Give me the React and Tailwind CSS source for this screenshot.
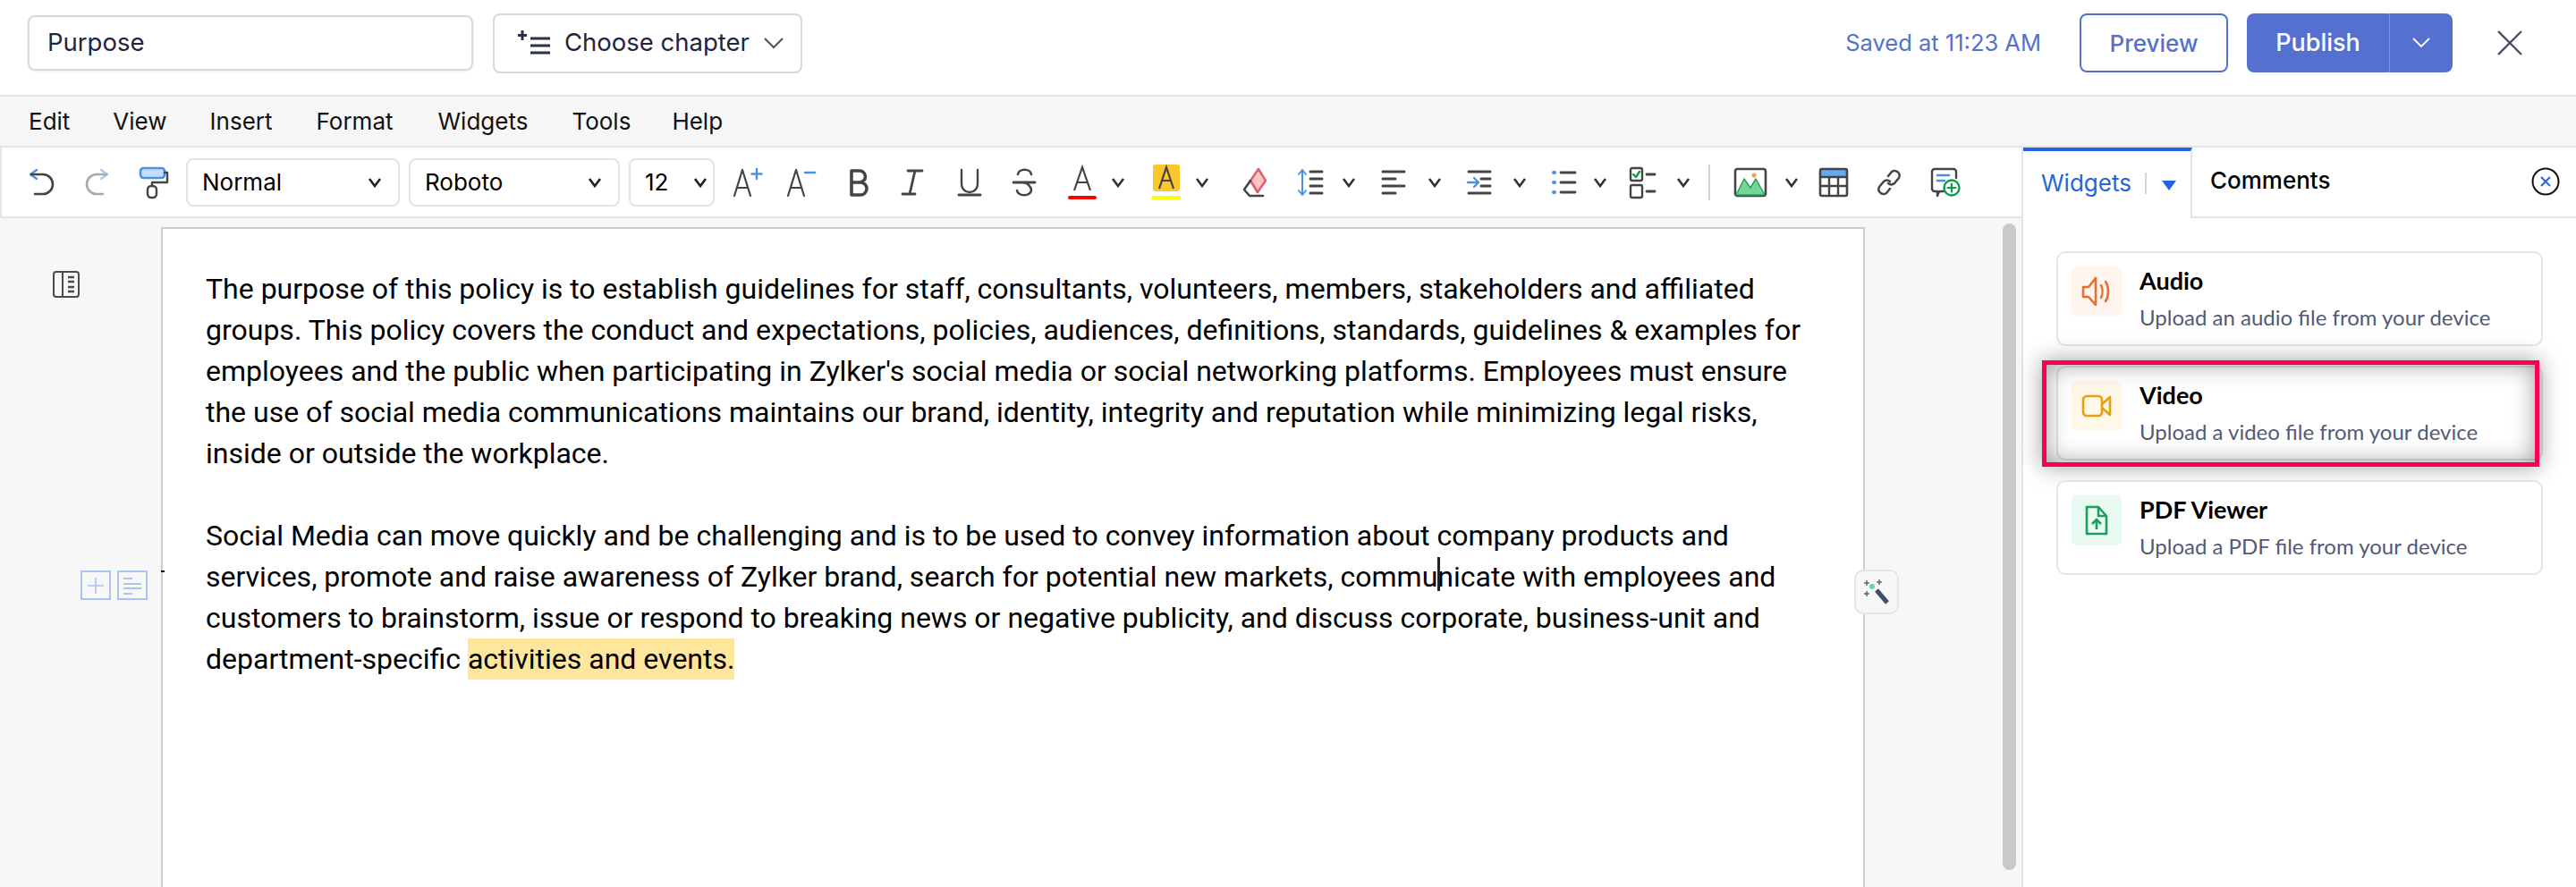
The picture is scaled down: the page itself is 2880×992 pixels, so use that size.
import React from "react";

const Chev = ({ c = "", w = 20, color = "#333" }) => (
  <span className={`flex justify-center shrink-0 ${c}`} style={{ width: w }}>
    <svg width="16" height="12" viewBox="0 0 16 12" fill="none" stroke={color} strokeWidth="2.600"><path d="M2 2l6 8 6-8" /></svg>
  </span>
);

const Ic = ({ c = "", children }) => (
  <span className={`w-10 h-10 flex items-center justify-center shrink-0 ${c}`}>
    <svg width="40" height="40" viewBox="0 0 40 40" fill="none" strokeLinecap="round" strokeLinejoin="round">{children}</svg>
  </span>
);

const D = "#444";
const B = "#4c90e6";

const Select = ({ c, label, w2 = "" }) => (
  <div className={`h-[54px] border-2 border-[#e3e3e3] rounded-[8px] flex items-center justify-between shrink-0 text-[26px] text-black ${c} ${w2}`}>
    <span>{label}</span>
    <Chev w={20} color="#222" />
  </div>
);

const Card = ({ title, sub, bg, icon, children }) => (
  <div className="relative h-[106px] border-2 border-[#e4e4ea] rounded-[10px] bg-white flex pl-[15px] pt-[15px]">
    <div className={`w-14 h-14 rounded-[6px] flex items-center justify-center shrink-0 ${bg}`}>{icon}</div>
    <div className="ml-5 -mt-[1px]">
      <div className="text-[27px] leading-[34px] font-bold text-black">{title}</div>
      <div className="text-[24px] leading-[34px] mt-[7px] text-[#525a78]">{sub}</div>
    </div>
    {children}
  </div>
);

export default function App() {
  return (
    <div className="w-[2880px] h-[992px] overflow-hidden flex flex-col bg-white font-['Inter',sans-serif]">
      <header className="h-[108px] border-b-2 border-[#e4e4e4] flex items-center shrink-0 pb-[12px] pt-[2px]">
        <div className="ml-[31px] w-[498px] h-[62px] border-2 border-[#d8d8df] rounded-[8px] flex items-center pl-5 text-[27.500px] text-[#1f2440] shadow-[0_1px_3px_rgba(0,0,0,0.08)]">Purpose</div>
        <div className="ml-[22px] w-[346px] h-[67px] border-2 border-[#d8d8df] rounded-[8px] flex items-center pl-[26px] text-[27.500px] text-[#1f2440]">
          <svg width="36" height="28" viewBox="0 0 36 28" fill="none" stroke="#2b3048" strokeWidth="3"><path d="M5 0v11M0 5.500h10M14 9h22M14 17h22M14 25h22" /></svg>
          <span className="ml-[16px]">Choose chapter</span>
          <span className="ml-[16px]"><svg width="22" height="14" viewBox="0 0 22 14" fill="none" stroke="#4a5068" strokeWidth="2"><path d="M1 2l10 10L21 2" /></svg></span>
        </div>
        <div className="ml-auto text-[25.500px] text-[#5470d0]">Saved at 11:23 AM</div>
        <button className="ml-[43px] w-[166px] h-[66px] border-2 border-[#5470d0] rounded-[8px] text-[#5470d0] text-[26px] font-medium bg-white">Preview</button>
        <div className="ml-[21px] w-[230px] h-[66px] rounded-[8px] bg-[#5470d0] flex items-center text-white text-[27px] font-medium">
          <span className="w-[159px] text-center">Publish</span>
          <span className="w-[71px] h-full border-l border-[#8094dc] flex items-center justify-center">
            <svg width="20" height="12" viewBox="0 0 20 12" fill="none" stroke="#fff" strokeWidth="1.800"><path d="M1 1l9 9 9-9" /></svg>
          </span>
        </div>
        <div className="ml-[50px] mr-[60px]">
          <svg width="28" height="28" viewBox="0 0 28 28" stroke="#4a5068" strokeWidth="2.400" fill="none"><path d="M1 1l26 26M27 1L1 27" /></svg>
        </div>
      </header>

      <nav className="h-[57px] bg-[#f6f6f6] border-b-2 border-[#e4e4e4] flex items-center shrink-0 text-[26px] text-[#111]">
        <span className="ml-[32px]">Edit</span>
        <span className="ml-[48px]">View</span>
        <span className="ml-[48px]">Insert</span>
        <span className="ml-[49px]">Format</span>
        <span className="ml-[50px]">Widgets</span>
        <span className="ml-[49px]">Tools</span>
        <span className="ml-[46px]">Help</span>
      </nav>

      <div className="flex flex-1 min-h-0">
        <div className="w-[2260px] flex flex-col shrink-0">
          <div className="h-[79px] border-b-2 border-l-2 border-[#e4e4e4] flex items-center pl-[24px] shrink-0">
            <Ic>
              <path d="M15 6l-7 5 7 5" stroke={B} strokeWidth="2.400" />
              <path d="M9 11h13a11 11 0 0 1 0 22h-9" stroke={D} strokeWidth="2.600" />
            </Ic>
            <Ic c="ml-[22px]">
              <path d="M25 6l7 5-7 5" stroke="#a9ccf6" strokeWidth="2.400" />
              <path d="M31 11H20a11 11 0 0 0 0 22h7" stroke="#aaa" strokeWidth="2.600" />
            </Ic>
            <Ic c="ml-[23px]">
              <rect x="6" y="4" width="27" height="11" rx="3.500" fill="#c5dcfb" stroke={B} strokeWidth="2.600" />
              <path d="M33 9h3v11H19v4" stroke={D} strokeWidth="2.400" />
              <rect x="14" y="24" width="10" height="13" rx="4" stroke={D} strokeWidth="2.400" />
            </Ic>
            <Select c="ml-[17px] w-[239px] pl-[16px] pr-[16px]" label="Normal" />
            <Select c="ml-[10px] w-[236px] pl-[16px] pr-[16px]" label="Roboto" />
            <Select c="ml-[10px] w-[96px] pl-[16px] pr-[4px]" label="12" />
            <Ic c="ml-[17px]">
              <path d="M5 35l9-29 9 29M8 26h12" stroke={D} strokeWidth="2.200" />
              <path d="M30 5v11M24.500 10.500h11" stroke={B} strokeWidth="2.400" />
            </Ic>
            <Ic c="ml-[20px]">
              <path d="M5 35l9-29 9 29M8 26h12" stroke={D} strokeWidth="2.200" />
              <path d="M24 9h11" stroke={B} strokeWidth="2.600" />
            </Ic>
            <Ic c="ml-[25px]">
              <path d="M11 7h9a6.500 6.500 0 0 1 0 13h-9zM11 20h10a7 7 0 0 1 0 14H11z" stroke={D} strokeWidth="3.600" />
            </Ic>
            <Ic c="ml-[19px]">
              <path d="M15 7h16M9 33h14M23 7l-6 26" stroke={D} strokeWidth="2.800" />
            </Ic>
            <Ic c="ml-[24px]">
              <path d="M11 6v16a9 9 0 0 0 18 0V6" stroke={D} strokeWidth="2.400" />
              <path d="M8 34h24" stroke={D} strokeWidth="3" />
            </Ic>
            <Ic c="ml-[21px]">
              <path d="M28 11c-1-7-14-7-15 0M12 29c1 7 15 7 16 0 0-4-4-8-8-9" stroke={D} strokeWidth="2.600" />
              <path d="M8 20h24" stroke={D} strokeWidth="2.800" />
            </Ic>
            <span className="relative w-10 h-10 ml-[25px] shrink-0 flex items-center justify-center">
              <svg width="40" height="40" viewBox="0 0 40 40" fill="none"><path d="M11 29l9-26 9 26M14 20h12" stroke={D} strokeWidth="2.200" /></svg>
              <span className="absolute left-[4px] top-[35px] w-8 h-[4px] rounded-[2px] bg-[#fb0000]"></span>
            </span>
            <Chev c="ml-[10px]" />
            <span className="relative w-10 h-10 ml-[24px] shrink-0 flex items-center justify-center">
              <span className="absolute left-[5px] top-0 w-[30px] h-[30px] rounded-[3px] bg-[#fdc62e]"></span>
              <svg className="relative" width="40" height="40" viewBox="0 0 40 40" fill="none"><path d="M12 27l8-24 8 24M15 18h10" stroke={D} strokeWidth="2.200" /></svg>
              <span className="absolute left-[4px] top-[35px] w-8 h-[4px] bg-[#ffff00]"></span>
            </span>
            <Chev c="ml-[10px]" />
            <Ic c="ml-[26px]">
              <path d="M27 5l8 13-9 13-8-13z" fill="#fcc4c4" stroke="#dd5f6e" strokeWidth="2.400" />
              <path d="M18 18l8 13" stroke="#dd5f6e" strokeWidth="2.200" />
              <path d="M18 18l-7 10 6 7h15" stroke={D} strokeWidth="2.600" />
            </Ic>
            <Ic c="ml-[25px]">
              <path d="M11 6v28M7 11l4-5 4 5M7 29l4 5 4-5" stroke={B} strokeWidth="2" />
              <path d="M20 8h13M20 16h13M20 24h13M20 32h13" stroke={D} strokeWidth="3" />
            </Ic>
            <Chev c="ml-[13px]" />
            <Ic c="ml-[20px]">
              <path d="M8 8h24M8 16h14M8 24h24M8 32h14" stroke={D} strokeWidth="3" />
            </Ic>
            <Chev c="ml-[16px]" />
            <Ic c="ml-[20px]">
              <path d="M8 8h24M8 32h24M22 16h10M22 24h10" stroke={D} strokeWidth="3" />
              <path d="M7 20h12M14 15l5 5-5 5" stroke={B} strokeWidth="2.400" />
            </Ic>
            <Chev c="ml-[15px]" />
            <Ic c="ml-[20px]">
              <path d="M16 9h16M16 20h16M16 31h16" stroke={D} strokeWidth="2.800" />
              <path d="M8 9h1M8 20h1M8 31h1" stroke={B} strokeWidth="4" />
            </Ic>
            <Chev c="ml-[10px]" />
            <Ic c="ml-[17px]">
              <rect x="7" y="4" width="13" height="14" rx="2" stroke={D} strokeWidth="2.400" />
              <path d="M10 11l3 3 4-6" stroke="#0c9b4d" strokeWidth="2.400" />
              <rect x="7" y="23" width="13" height="14" rx="2" stroke={D} strokeWidth="2.400" />
              <path d="M25 11h9M25 30h9" stroke={D} strokeWidth="2.800" />
            </Ic>
            <Chev c="ml-[16px]" />
            <span className="ml-[18px] w-[2px] h-10 bg-[#cfcfcf] shrink-0"></span>
            <Ic c="ml-[25px]">
              <rect x="3" y="5" width="34" height="30" rx="2.500" stroke={D} strokeWidth="2.600" />
              <path d="M4 34l9-18 7 10 6-10 10 18z" fill="#72d79a" stroke="#2e9d5e" strokeWidth="1.500" />
              <circle cx="24" cy="12" r="2.500" fill="#f3a23a" />
            </Ic>
            <Chev c="ml-[16px]" />
            <Ic c="ml-[17px]">
              <rect x="5" y="5" width="30" height="9" fill="#69a8ee" />
              <rect x="5" y="5" width="30" height="30" rx="2" stroke={D} strokeWidth="2.600" />
              <path d="M15 14v21M25 14v21M5 14h30M5 24h30" stroke={D} strokeWidth="2.400" />
            </Ic>
            <Ic c="ml-[22px]">
              <path d="M19 13l4-5a5.500 5.500 0 0 1 8 7l-5 6a5.500 5.500 0 0 1-7 0M21 27l-4 5a5.500 5.500 0 0 1-8-7l5-6a5.500 5.500 0 0 1 7 0" stroke={D} strokeWidth="2.500" />
            </Ic>
            <Ic c="ml-[23px]">
              <path d="M18 30h-5l-2 5v-5H8a3 3 0 0 1-3-3V8a3 3 0 0 1 3-3h21a3 3 0 0 1 3 3v7" stroke={D} strokeWidth="2.400" />
              <path d="M11 12h13" stroke={B} strokeWidth="2.600" />
              <path d="M11 18h8" stroke={B} strokeWidth="2.600" />
              <circle cx="27" cy="26" r="8.500" fill="#fff" stroke="#0c9b4d" strokeWidth="2.400" />
              <path d="M27 21.500v9M22.500 26h9" stroke="#0c9b4d" strokeWidth="2.200" />
            </Ic>
          </div>

          <div className="flex-1 min-h-0 flex bg-[#f7f7f7] pt-[10px]">
            <div className="w-[180px] shrink-0 flex flex-col">
              <div className="ml-[59px] mt-[49px]">
                <svg width="30" height="30" viewBox="0 0 30 30" fill="none" stroke="#4a4a4a" strokeWidth="2"><rect x="1" y="1" width="28" height="28" rx="3" /><path d="M11 1v28" /><path d="M17 7h7M17 12h7M17 18h7M17 23h7" strokeWidth="2.400" /></svg>
              </div>
              <div className="ml-[90px] mt-[305px] flex gap-[7px]">
                <span className="w-[34px] h-[33px] border-2 border-[#a9c3f3] flex items-center justify-center">
                  <svg width="20" height="20" viewBox="0 0 20 20" stroke="#a9c3f3" strokeWidth="1.600"><path d="M10 1v18M1 10h18" /></svg>
                </span>
                <span className="w-[34px] h-[33px] border-2 border-[#a9c3f3] flex items-center justify-center">
                  <svg width="22" height="20" viewBox="0 0 22 20" stroke="#a9c3f3" strokeWidth="1.800"><path d="M1 2h10M1 8h20M1 13h20M1 19h10" /></svg>
                </span>
              </div>
            </div>
            <div className="relative w-[1905px] shrink-0 bg-white border-t-2 border-x-2 border-[#cdcdcd] pl-[48px] pt-[44px] text-[32px] leading-[46px] text-black font-['Roboto',sans-serif] whitespace-nowrap">
              <span className="absolute -left-[2px] top-[382px] w-[4px] h-[2px] bg-black"></span>
              <p>
                The purpose of this policy is to establish guidelines for staff, consultants, volunteers, members, stakeholders and affiliated<br />
                groups. This policy covers the conduct and expectations, policies, audiences, definitions, standards, guidelines &amp; examples for<br />
                employees and the public when participating in Zylker's social media or social networking platforms. Employees must ensure<br />
                the use of social media communications maintains our brand, identity, integrity and reputation while minimizing legal risks,<br />
                inside or outside the workplace.
              </p>
              <p className="mt-[46px]">
                Social Media can move quickly and be challenging and is to be used to convey information about company products and<br />
                services, promote and raise awareness of Zylker brand, search for potential new markets, commu<span className="relative"><span className="absolute left-0 top-[-3px] w-[3px] h-[38px] bg-[#222]"></span></span>nicate with employees and<br />
                customers to brainstorm, issue or respond to breaking news or negative publicity, and discuss corporate, business-unit and<br />
                department-specific <span className="bg-[#fee69c] py-[4px]">activities and events.</span>
              </p>
            </div>
            <div className="relative flex-1">
              <div className="absolute -left-[12px] top-[383px] w-[50px] h-[50px] rounded-[10px] border-2 border-[#e6e6e6] bg-[#f7f7f7] flex items-center justify-center">
                <svg width="30" height="30" viewBox="0 0 30 30" fill="none"><path d="M15 13l12 14" stroke="#3f5168" strokeWidth="5" /><path d="M4 2v6M1 5h6M18 1v6M15 4h6M4 14v6M1 17h6" stroke="#5a6b80" strokeWidth="1.500" /><circle cx="10" cy="9" r="3" fill="#67d69a" /></svg>
              </div>
              <div className="absolute left-[154px] top-[-4px] w-[15px] h-[723px] rounded-[8px] bg-[#c9c9c9]"></div>
            </div>
          </div>
        </div>

        <aside className="flex-1 border-l-2 border-[#e4e4e4] flex flex-col font-['Lato',sans-serif]">
          <div className="h-[79px] flex shrink-0 font-['Inter',sans-serif]">
            <div className="w-[189px] border-t-[4px] border-[#2563e0] border-r-2 border-r-[#e4e4e4] flex items-center pl-[20px] text-[26px] text-[#2563e0] pb-[4px]">
              <span>Widgets</span>
              <span className="ml-[15px] w-[2px] h-6 bg-[#d6d6d6]"></span>
              <svg className="ml-[17px] mt-1" width="16" height="12" viewBox="0 0 16 12"><path d="M0 1h16L8 12z" fill="#2563e0" /></svg>
            </div>
            <div className="flex-1 border-b-2 border-[#e4e4e4] flex items-center pl-[20px] pr-[18px] justify-between text-[26px] font-medium text-black pb-[4px]">
              <span>Comments</span>
              <svg className="mt-[2px]" width="32" height="32" viewBox="0 0 32 32" fill="none"><circle cx="16" cy="16" r="14.500" stroke="#111" strokeWidth="2" /><path d="M11 11l10 10M21 11L11 21" stroke="#2563e0" strokeWidth="2" /></svg>
            </div>
          </div>
          <div className="flex flex-col gap-[22px] pt-[37px] pl-[37px] pr-[37px]">
            <Card title="Audio" sub="Upload an audio file from your device" bg="bg-[#fff5ee]" icon={
              <svg width="34" height="36" viewBox="0 0 34 36" fill="none" stroke="#e8712a" strokeWidth="2.600" strokeLinejoin="round" strokeLinecap="round"><path d="M2 13h6l8-10v30l-8-9H2z" /><path d="M22 11c2 4 2 10 0 14M27 7c4 6 4 16 0 22" /></svg>
            } />
            <Card title="Video" sub="Upload a video file from your device" bg="bg-[#fff8e8]" icon={
              <svg width="34" height="26" viewBox="0 0 34 26" fill="none" stroke="#e5a00d" strokeWidth="2.600" strokeLinejoin="round"><rect x="2" y="2" width="21" height="22" rx="4" /><path d="M23 11l9-8v20l-9-8" /></svg>
            }>
              <div className="absolute -left-[18px] -top-[8px] w-[556px] h-[119px] border-[5px] border-[#f9004f] shadow-[0_0_24px_rgba(0,0,0,0.38),inset_0_0_26px_rgba(0,0,0,0.38)] pointer-events-none"></div>
            </Card>
            <Card title="PDF Viewer" sub="Upload a PDF file from your device" bg="bg-[#e9fbf1]" icon={
              <svg width="28" height="34" viewBox="0 0 28 34" fill="none" stroke="#1e9e5c" strokeWidth="2.600" strokeLinejoin="round"><path d="M3 2h13l9 10v20H3z" /><path d="M16 2v10h9" /><path d="M14 27V16M9 21l5-5 5 5" /></svg>
            } />
          </div>
        </aside>
      </div>
    </div>
  );
}
